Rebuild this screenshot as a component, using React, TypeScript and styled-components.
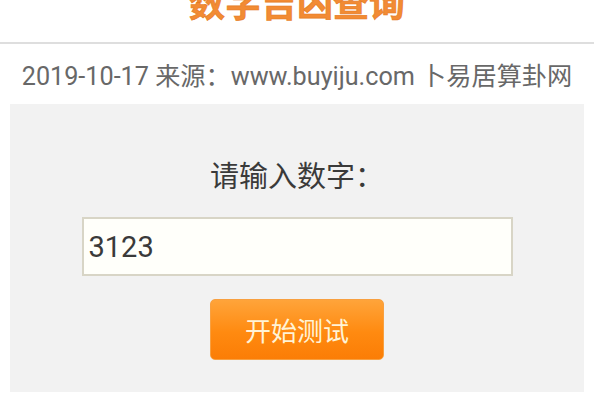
import styled, { createGlobalStyle } from 'styled-components'

const GlobalStyle = createGlobalStyle`
  html, body {
    margin: 0;
    padding: 0;
    background: #fff;
  }
  body {
    font-family: Roboto, 'Noto Sans CJK SC', sans-serif;
    overflow: hidden;
  }
`

const Page = styled.div`
  width: 594px;
  height: 400px;
  display: flex;
  flex-direction: column;
  overflow: hidden;
`

const Header = styled.header`
  height: 42px;
  flex-shrink: 0;
  border-bottom: 2px solid #dedede;
  overflow: hidden;
  display: flex;
  justify-content: center;
`

const Title = styled.h1`
  margin: -17px 0 0;
  font-family: 'Noto Sans CJK SC', sans-serif;
  font-size: 36px;
  line-height: 36px;
  font-weight: 700;
  color: #f28b34;
  -webkit-text-stroke: 0.6px #e57a22;
`

const Meta = styled.div`
  height: 60px;
  flex-shrink: 0;
  display: flex;
  align-items: center;
  justify-content: center;
  font-size: 25.2px;
  color: #686868;
  white-space: nowrap;
`

const Panel = styled.section`
  margin-left: 10px;
  width: 574px;
  height: 288px;
  background: #f2f2f2;
  display: flex;
  flex-direction: column;
  align-items: center;
  padding-top: 52px;
  box-sizing: border-box;
`

const Label = styled.div`
  font-family: 'Noto Sans CJK SC', sans-serif;
  font-size: 29px;
  line-height: 36px;
  color: #3a3a3a;
  margin-bottom: 25px;
`

const NumberInput = styled.input`
  width: 431px;
  height: 59px;
  box-sizing: border-box;
  border: 2px solid #d8d5c6;
  background: #fffffa;
  padding: 0 5px;
  font-family: Roboto, sans-serif;
  font-size: 29px;
  color: #3a3a3a;
  outline: none;
  margin: 0 0 23px;
`

const StartButton = styled.button`
  width: 174px;
  height: 61px;
  border: 1px solid #f8a040;
  border-radius: 5px;
  background: linear-gradient(#ffa43a, #ff8a10 55%, #fb7d06);
  color: #fff3d6;
  font-family: 'Noto Sans CJK SC', sans-serif;
  font-size: 26px;
  cursor: pointer;
  padding: 0;
`

export default function App() {
  return (
    <Page>
      <GlobalStyle />
      <Header>
        <Title>数字吉凶查询</Title>
      </Header>
      <Meta>2019-10-17 来源：www.buyiju.com 卜易居算卦网</Meta>
      <Panel>
        <Label>请输入数字：</Label>
        <NumberInput defaultValue="3123" />
        <StartButton>开始测试</StartButton>
      </Panel>
    </Page>
  )
}
